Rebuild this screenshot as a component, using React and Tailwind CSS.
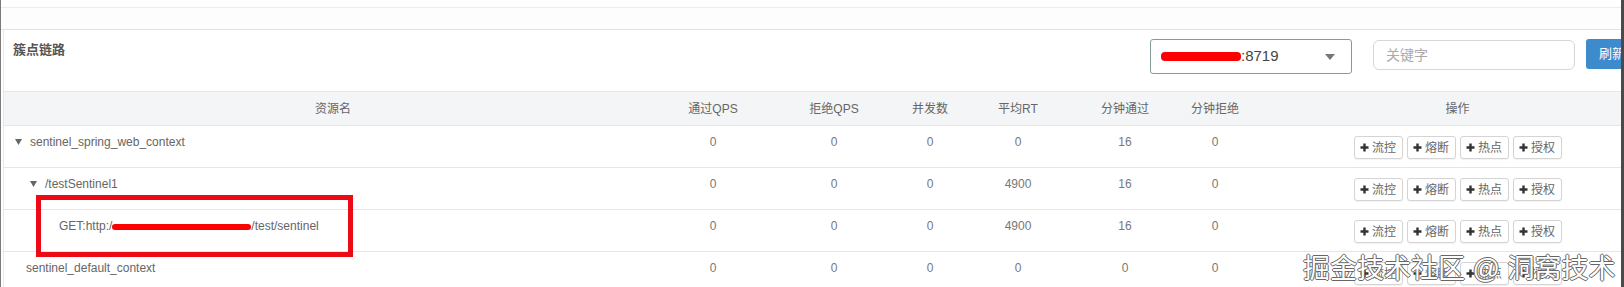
import React from "react";

const cols =
  "grid grid-cols-[658px_102px_140px_52px_124px_90px_90px_1fr]";

const rows = [
  { name: "sentinel_spring_web_context", pad: "pl-[11px]", caret: true, v: ["0", "0", "0", "0", "16", "0"] },
  { name: "/testSentinel1", pad: "pl-[26px]", caret: true, v: ["0", "0", "0", "4900", "16", "0"] },
  { name: "get", pad: "pl-[55px]", caret: false, v: ["0", "0", "0", "4900", "16", "0"] },
  { name: "sentinel_default_context", pad: "pl-[22px]", caret: false, v: ["0", "0", "0", "0", "0", "0"] },
];

function Caret() {
  return (
    <svg width="7" height="6" viewBox="0 0 7 6" className="shrink-0">
      <polygon points="0,0 7,0 3.5,6" fill="#666" />
    </svg>
  );
}

function Plus() {
  return (
    <svg width="9" height="9" viewBox="0 0 9 9" className="shrink-0">
      <path d="M4.5 0.5v8M0.5 4.5h8" stroke="#333" strokeWidth="2.4" />
    </svg>
  );
}

function OpButton({ label }) {
  return (
    <button className="flex items-center gap-[3px] h-[23px] w-[49px] justify-center rounded-[3px] border border-[#d4d4d4] bg-white text-[12px] leading-none text-[#666] shadow-[0_1px_1px_rgba(0,0,0,0.05)]">
      <Plus />
      <span>{label}</span>
    </button>
  );
}

function NameCell({ row }) {
  if (row.name === "get") {
    return (
      <div className={`flex items-center h-[20px] ${row.pad}`}>
        <span>GET:http:/</span>
        <span className="inline-block w-[139px] h-[6px] bg-[#f00] rounded-full mt-[2px]" />
        <span>/test/sentinel</span>
      </div>
    );
  }
  return (
    <div className={`flex items-center gap-[8px] h-[20px] ${row.pad}`}>
      {row.caret && <Caret />}
      <span>{row.name}</span>
    </div>
  );
}

export default function App() {
  return (
    <div className="relative w-[1624px] h-[287px] overflow-hidden bg-white border-l border-l-[#7a7a7a] border-r-[3px] border-r-[#4a4a4a] font-['Liberation_Sans','Noto_Sans_CJK_SC',sans-serif] text-[12px] text-[#666]">
      <div className="h-[8px] border-b border-[#ececec]" />
      <div className="h-[22px] border-b border-[#e2e2e2] bg-[#fdfdfd]" />

      <div className="ml-[2px] border-l border-[#e6e6e6]">
        {/* panel header */}
        <div className="flex h-[61px] items-start">
          <div className="w-[1146px] shrink-0 pl-[9px] pt-[10px] text-[13px] leading-[20px] font-bold text-[#555]">
            簇点链路
          </div>
          <div className="flex shrink-0 items-start pt-[9px]">
            <div className="flex h-[35px] w-[202px] items-center rounded-[3px] border border-[#869a9a] pl-[10px] pr-[16px]">
              <span className="inline-block h-[9px] w-[80px] rounded-sm bg-[#f00]" />
              <span className="text-[15px] text-[#444]">:8719</span>
              <svg width="10" height="6" viewBox="0 0 10 6" className="ml-auto">
                <polygon points="0,0 10,0 5,6" fill="#777" />
              </svg>
            </div>
            <div className="ml-[21px] mt-[1px] flex h-[30px] w-[202px] items-center rounded-[6px] border border-[#d6d6d6] pl-[12px] text-[14px] text-[#aaa]">
              关键字
            </div>
            <div className="ml-[11px] flex h-[30px] w-[60px] items-center rounded-[3px] bg-[#3d8bcd] pl-[13px] text-[13px] text-white">
              刷新
            </div>
          </div>
        </div>

        {/* table header */}
        <div className={`${cols} h-[35px] items-center border-y border-[#e6e6e6] bg-[#f4f5f6] text-[12px] text-[#666]`}>
          <div className="text-center">资源名</div>
          <div className="text-center">通过QPS</div>
          <div className="text-center">拒绝QPS</div>
          <div className="text-center">并发数</div>
          <div className="text-center">平均RT</div>
          <div className="text-center">分钟通过</div>
          <div className="text-center">分钟拒绝</div>
          <div className="pl-[34px] text-center">操作</div>
        </div>

        {rows.map((row, i) => (
          <div key={i} className={`${cols} h-[42px] items-start border-b border-[#e6e6e6] leading-[20px] text-[#666]`}>
            <div className="pt-[6px]">
              <NameCell row={row} />
            </div>
            {row.v.map((v, j) => (
              <div key={j} className="pt-[6px] text-center text-[#777]">
                {v}
              </div>
            ))}
            <div className="flex justify-center gap-[4px] pl-[34px] pt-[10px]">
              <OpButton label="流控" />
              <OpButton label="熔断" />
              <OpButton label="热点" />
              <OpButton label="授权" />
            </div>
          </div>
        ))}
      </div>

      {/* annotation box */}
      <div className="absolute left-[35px] top-[195px] h-[62px] w-[317px] border-[5px] border-[#ec0a14]" />

      {/* watermark */}
      <div className="absolute left-[1302px] top-[254px] whitespace-nowrap text-[27px] leading-[30px] text-white [text-shadow:1px_0_#666,-1px_0_#666,0_1px_#666,0_-1px_#666]">
        掘金技术社区 @ 洞窝技术
      </div>
    </div>
  );
}
